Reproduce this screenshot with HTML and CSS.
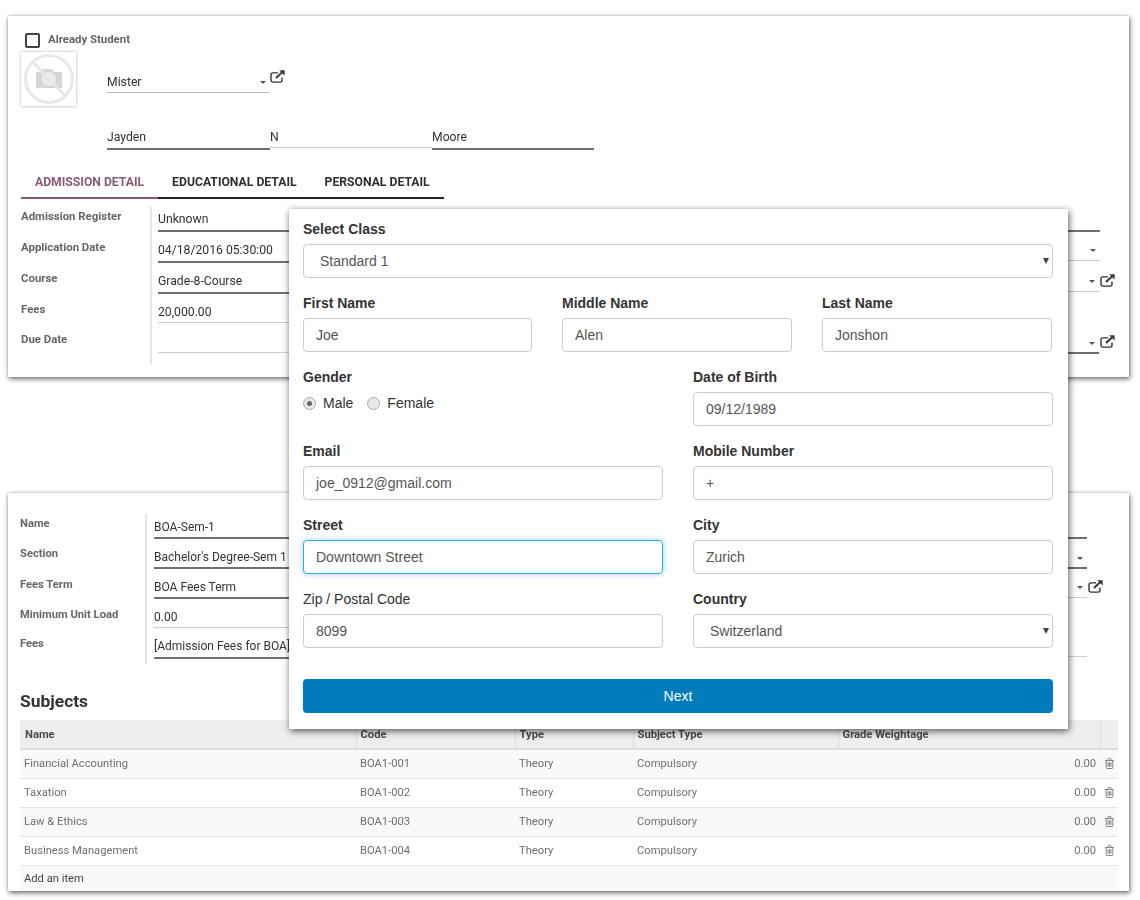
FILE: index.html
```html
<!DOCTYPE html>
<html lang="en">
<head>
<meta charset="utf-8">
<title>Admission</title>
<link rel="stylesheet" href="styles.css">
</head>
<body>
<svg class="defs" width="0" height="0" aria-hidden="true">
  <symbol id="ext" viewBox="0 0 15 14" preserveAspectRatio="none">
    <path d="M12 8v3a2 2 0 0 1-2 2H3a2 2 0 0 1-2-2V5a2 2 0 0 1 2-2h5" fill="none" stroke="currentColor" stroke-width="1.4"/>
    <path d="M6 8.6 12 2.6" fill="none" stroke="currentColor" stroke-width="2"/>
    <path d="M9.2 .4H14.6V5.8Z" fill="currentColor"/>
  </symbol>
  <symbol id="trash" viewBox="0 0 9 11">
    <path d="M.2 2.5h8.6M3 2.3V1.2q0-.7.7-.7h1.6q.7 0 .7.7v1.1M1.2 2.6v7q0 .9.9.9h4.8q.9 0 .9-.9v-7M3 4.2v4.6M4.5 4.2v4.6M6 4.2v4.6" fill="none" stroke="currentColor" stroke-width=".9"/>
  </symbol>
</svg>

<section class="card card-student">
  <div class="already"><span class="checkbox"></span><span class="already-label">Already Student</span></div>
  <div class="head">
    <div class="avatar">
      <svg width="55" height="54" viewBox="0 0 55 54">
        <path d="M15 20h5l2-3h9l2 3h8v16H15z" fill="#d6d6d6"/>
        <circle cx="28" cy="27" r="7" fill="#ececec"/>
        <circle cx="28" cy="27" r="23.500" fill="none" stroke="#e8e8e8" stroke-width="3"/>
        <path d="M12 10 44 44" stroke="#e8e8e8" stroke-width="3"/>
      </svg>
    </div>
    <div class="title-field"><span>Mister</span><i class="caret"></i></div>
    <svg class="ext ext-title"><use href="#ext"/></svg>
  </div>
  <div class="names">
    <div class="name dark">Jayden</div>
    <div class="name light">N</div>
    <div class="name dark">Moore</div>
  </div>
  <div class="tabs">
    <div class="tab active">ADMISSION DETAIL</div>
    <div class="tab">EDUCATIONAL DETAIL</div>
    <div class="tab">PERSONAL DETAIL</div>
  </div>
  <div class="form">
    <div class="col">
      <div class="row"><div class="lbl">Admission Register</div><div class="val dark">Unknown</div></div>
      <div class="row"><div class="lbl">Application Date</div><div class="val dark">04/18/2016 05:30:00</div></div>
      <div class="row"><div class="lbl">Course</div><div class="val dark">Grade-8-Course</div></div>
      <div class="row"><div class="lbl">Fees</div><div class="val light">20,000.00</div></div>
      <div class="row"><div class="lbl">Due Date</div><div class="val light empty"></div></div>
    </div>
    <div class="col side">
      <div class="srow"><div class="sval dark"></div></div>
      <div class="srow"><div class="sval light"><i class="caret"></i></div></div>
      <div class="srow"><div class="sval light"><i class="caret"></i></div><svg class="ext"><use href="#ext"/></svg></div>
      <div class="srow"></div>
      <div class="srow"><div class="sval dark"><i class="caret"></i></div><svg class="ext"><use href="#ext"/></svg></div>
    </div>
  </div>
</section>

<section class="card card-course">
  <div class="form">
    <div class="col">
      <div class="row"><div class="lbl">Name</div><div class="val dark">BOA-Sem-1</div></div>
      <div class="row"><div class="lbl">Section</div><div class="val dark">Bachelor's Degree-Sem 1</div></div>
      <div class="row"><div class="lbl">Fees Term</div><div class="val dark">BOA Fees Term</div></div>
      <div class="row"><div class="lbl">Minimum Unit Load</div><div class="val light">0.00</div></div>
      <div class="row"><div class="lbl">Fees</div><div class="val dark tall">[Admission Fees for BOA]</div></div>
    </div>
    <div class="col side">
      <div class="srow"><div class="sval dark"></div></div>
      <div class="srow"><div class="sval dark"><i class="caret"></i></div></div>
      <div class="srow"><div class="sval light"><i class="caret"></i></div><svg class="ext"><use href="#ext"/></svg></div>
      <div class="srow"></div>
      <div class="srow"><div class="sval light"></div></div>
    </div>
  </div>
  <h2 class="subjects">Subjects</h2>
  <table class="grid">
    <colgroup><col class="c-name"><col class="c-code"><col class="c-type"><col class="c-stype"><col class="c-grade"><col class="c-del"></colgroup>
    <thead><tr><th>Name</th><th>Code</th><th>Type</th><th>Subject Type</th><th>Grade Weightage</th><th></th></tr></thead>
    <tbody>
      <tr><td>Financial Accounting</td><td>BOA1-001</td><td>Theory</td><td>Compulsory</td><td class="num">0.00</td><td class="del"><svg class="trash"><use href="#trash"/></svg></td></tr>
      <tr><td>Taxation</td><td>BOA1-002</td><td>Theory</td><td>Compulsory</td><td class="num">0.00</td><td class="del"><svg class="trash"><use href="#trash"/></svg></td></tr>
      <tr><td>Law &amp; Ethics</td><td>BOA1-003</td><td>Theory</td><td>Compulsory</td><td class="num">0.00</td><td class="del"><svg class="trash"><use href="#trash"/></svg></td></tr>
      <tr><td>Business Management</td><td>BOA1-004</td><td>Theory</td><td>Compulsory</td><td class="num">0.00</td><td class="del"><svg class="trash"><use href="#trash"/></svg></td></tr>
      <tr class="add"><td colspan="6">Add an item</td></tr>
    </tbody>
  </table>
</section>

<section class="modal">
  <div class="fld">
    <div class="mlabel">Select Class</div>
    <div class="input select">Standard 1<i class="sel-caret"></i></div>
  </div>
  <div class="cols3">
    <div class="fld"><div class="mlabel">First Name</div><div class="input">Joe</div></div>
    <div class="fld"><div class="mlabel">Middle Name</div><div class="input">Alen</div></div>
    <div class="fld"><div class="mlabel">Last Name</div><div class="input">Jonshon</div></div>
  </div>
  <div class="cols2">
    <div class="fld">
      <div class="mlabel">Gender</div>
      <div class="radios">
        <span class="radio on"></span><span class="radio-text">Male</span>
        <span class="radio"></span><span class="radio-text">Female</span>
      </div>
    </div>
    <div class="fld"><div class="mlabel">Date of Birth</div><div class="input">09/12/1989</div></div>
    <div class="fld"><div class="mlabel">Email</div><div class="input">joe_0912@gmail.com</div></div>
    <div class="fld"><div class="mlabel">Mobile Number</div><div class="input">+</div></div>
    <div class="fld"><div class="mlabel">Street</div><div class="input focus">Downtown Street</div></div>
    <div class="fld"><div class="mlabel">City</div><div class="input">Zurich</div></div>
    <div class="fld"><div class="mlabel normal">Zip / Postal Code</div><div class="input">8099</div></div>
    <div class="fld"><div class="mlabel">Country</div><div class="input select">Switzerland<i class="sel-caret"></i></div></div>
  </div>
  <div class="next">Next</div>
</section>
</body>
</html>
```
FILE: styles.css
```css
* { box-sizing: border-box; }
html, body { margin: 0; padding: 0; background: #fff; }
body {
  position: relative;
  width: 1140px;
  height: 900px;
  padding: 16px 11px 0 8px;
  overflow: hidden;
  font-family: Roboto, "Liberation Sans", sans-serif;
  font-size: 12.2px;
  color: #333;
}
.defs { position: absolute; }

/* cards */
.card {
  width: 1121px;
  background: #fff;
  box-shadow: 1px 2px 5px rgba(0, 0, 0, .55), 0 0 3px rgba(0, 0, 0, .2);
  overflow: hidden;
  filter: blur(.3px);
}
.card-student { height: 361px; padding: 17px 0 0 13px; }
.card-course { height: 398px; margin-top: 116px; padding: 21px 0 0 12px; }

.already { display: flex; height: 15px; padding-left: 4px; }
.checkbox { width: 15px; height: 15px; border: 2px solid #444; border-radius: 2px; }
.already-label { margin: -2px 0 0 8px; line-height: 16px; font-size: 11.4px; font-weight: 700; color: #666; }

.head { display: flex; align-items: flex-start; margin-top: 4px; }
.avatar { width: 55px; height: 54px; box-shadow: 0 0 3px rgba(0, 0, 0, .3); }
.avatar svg { display: block; }
.title-field {
  display: flex; justify-content: space-between; align-items: center;
  width: 162px; height: 21px; margin: 20px 0 0 31px; padding-right: 3px;
  border-bottom: 1px solid #bbb; line-height: 18px;
}
.ext { display: block; width: 15px; height: 13px; flex: none; margin: 0 0 5px 1px; color: #333; }
.ext-title { margin: 18px 0 0 1px; }
.caret { display: block; width: 0; height: 0; border: 3.5px solid transparent; border-top-color: #555; border-bottom: 0; }

.names { display: flex; align-items: flex-start; margin: 22px 0 0 86px; }
.name { width: 162px; line-height: 18px; }
.name:first-child { width: 163px; }
.name.dark { padding-bottom: 2px; border-bottom: 2px solid #6f6f6f; }
.name.light { padding-bottom: 1px; border-bottom: 1px solid #ccc; }

.tabs { display: flex; width: fit-content; margin-top: 21px; }
.tab {
  padding: 1px 14px 5px; line-height: 20px; font-weight: 700; color: #2f2f2f;
  border-bottom: 2px solid #222;
}
.tab.active { color: #875a7b; border-bottom-color: #875a7b; }

.form { display: flex; }
.card-student .form { margin-top: 8px; }
.col { width: 540px; flex: none; }
.row { display: grid; grid-template-columns: 131px 1fr; column-gap: 6px; align-items: end; }
.lbl {
  align-self: stretch; line-height: 18px; font-size: 11.4px; font-weight: 700; color: #666;
  border-right: 2px solid #e4e4e4; padding-top: 6px;
}
.val { padding-top: 1px; line-height: 18px; overflow: hidden; white-space: nowrap; }
.val.dark { height: 23px; border-bottom: 2px solid #6f6f6f; }
.val.light { height: 20px; padding-top: 0; border-bottom: 1px solid #ccc; }
.val.empty { height: 30px; }

.card-student .row { height: 31px; }
.card-student .row:nth-child(1) { height: 25px; }
.card-student .row:nth-child(1) .lbl { padding-top: 0; }
.card-student .row:nth-child(4) { height: 29px; }
.card-student .row:nth-child(5) { height: 41px; align-items: start; }
.card-student .row:nth-child(5) .lbl { padding-top: 7px; }

.card-course .row { grid-template-columns: 127px 1fr; column-gap: 7px; height: 30px; }
.card-course .lbl { padding-top: 7px; font-size: 11.2px; }
.card-course .val { font-size: 12px; }
.card-course .val.dark { height: 22px; }
.card-course .row:nth-child(1) { height: 25px; }
.card-course .row:nth-child(1) .lbl { padding-top: 1px; }
.card-course .row:nth-child(2) .lbl { padding-top: 6px; }
.card-course .row:nth-child(4) { height: 29px; }
.card-course .row:nth-child(5) { height: 36px; align-items: start; }
.card-course .val.tall { height: 31px; padding-top: 9px; }

.side { width: 554px; }
.srow { display: flex; align-items: flex-end; height: 31px; padding-left: 140px; }
.sval { display: flex; justify-content: flex-end; align-items: center; width: 399px; padding-right: 4px; }
.sval.dark { height: 20px; border-bottom: 2px solid #6f6f6f; }
.sval.light { height: 20px; border-bottom: 1px solid #ccc; }
.card-student .srow:nth-child(1) { height: 25px; }
.card-student .srow:nth-child(2) { height: 29px; }
.card-student .srow:nth-child(4) { height: 31px; }
.card-student .srow:nth-child(5) .ext { margin-bottom: 6px; }
.card-course .srow { height: 30px; padding-left: 128px; }
.card-course .srow:nth-child(1) { height: 25px; }
.card-course .srow:nth-child(3) { height: 29px; }
.card-course .srow:nth-child(5) { height: 29px; }

.subjects {
  margin: 25px 0 7px; line-height: 24px; font-size: 17.4px; font-weight: 700; color: #333;
}
.grid {
  width: 1098px; table-layout: fixed; border-collapse: collapse;
  font-size: 11.2px; color: #6f6f6f;
}
.c-name { width: 336px; }
.c-code { width: 159px; }
.c-type { width: 118px; }
.c-stype { width: 205px; }
.c-grade { width: 262px; }
.c-del { width: 18px; }
.grid th {
  height: 29px; padding: 0 4px; text-align: left; font-weight: 700; color: #4c4c4c;
  background: #eee; border-bottom: 2px solid #ddd; border-right: 1px solid #ddd;
}
.grid th:first-child { padding-left: 5px; }
.grid th:last-child { border-right: 0; }
.grid td { height: 29px; padding: 0 4px; border-bottom: 1px solid #e4e4e4; white-space: nowrap; }
.grid tbody tr:nth-child(odd) { background: #f9f9f9; }
.grid .num { text-align: right; }
.grid .del { padding: 0 0 0 5px; }
.trash { display: block; width: 9px; height: 11px; color: #777; }
.grid .add td { height: 27px; color: #444; border-bottom: 0; }

/* modal */
.modal {
  position: absolute; left: 289px; top: 209px;
  width: 779px; height: 520px; padding: 10px 15px 16px 14px;
  background: #fff;
  box-shadow: 1px 2px 7px rgba(0, 0, 0, .65);
  font-family: "Liberation Sans", Arial, sans-serif; font-size: 14px; color: #555;
}
.fld { height: 74px; }
.mlabel { height: 25px; line-height: 20px; font-weight: 700; color: #333; }
.mlabel.normal { font-weight: 400; }
.input {
  position: relative; height: 34px; padding: 0 12px; line-height: 32px;
  border: 1px solid #ccc; border-radius: 4px; background: #fff;
}
.select { padding-left: 16px; }
.sel-caret {
  position: absolute; right: 3px; top: 13px; width: 0; height: 0;
  border: 3.5px solid transparent; border-top: 6px solid #444; border-bottom: 0;
}
.focus { border-color: #2bb0ee; box-shadow: 0 0 6px rgba(102, 175, 233, .6); }
.cols3 { display: grid; grid-template-columns: 229px 230px 230px; column-gap: 30px; }
.cols2 { display: grid; grid-template-columns: repeat(2, 360px); column-gap: 30px; }
.radios { display: flex; align-items: center; height: 20px; margin-top: 1px; color: #333; }
.radio {
  position: relative; width: 13px; height: 13px; border-radius: 50%;
  border: 1px solid #aaa; background: #e9e9e9;
}
.radio.on::after {
  content: ""; position: absolute; left: 3px; top: 3px; width: 5px; height: 5px;
  border-radius: 50%; background: #666;
}
.radio-text { margin: 0 14px 0 7px; }
.next {
  height: 34px; margin-top: 16px; line-height: 34px; text-align: center;
  background: #007bbb; color: #fff; border-radius: 4px;
}
```
